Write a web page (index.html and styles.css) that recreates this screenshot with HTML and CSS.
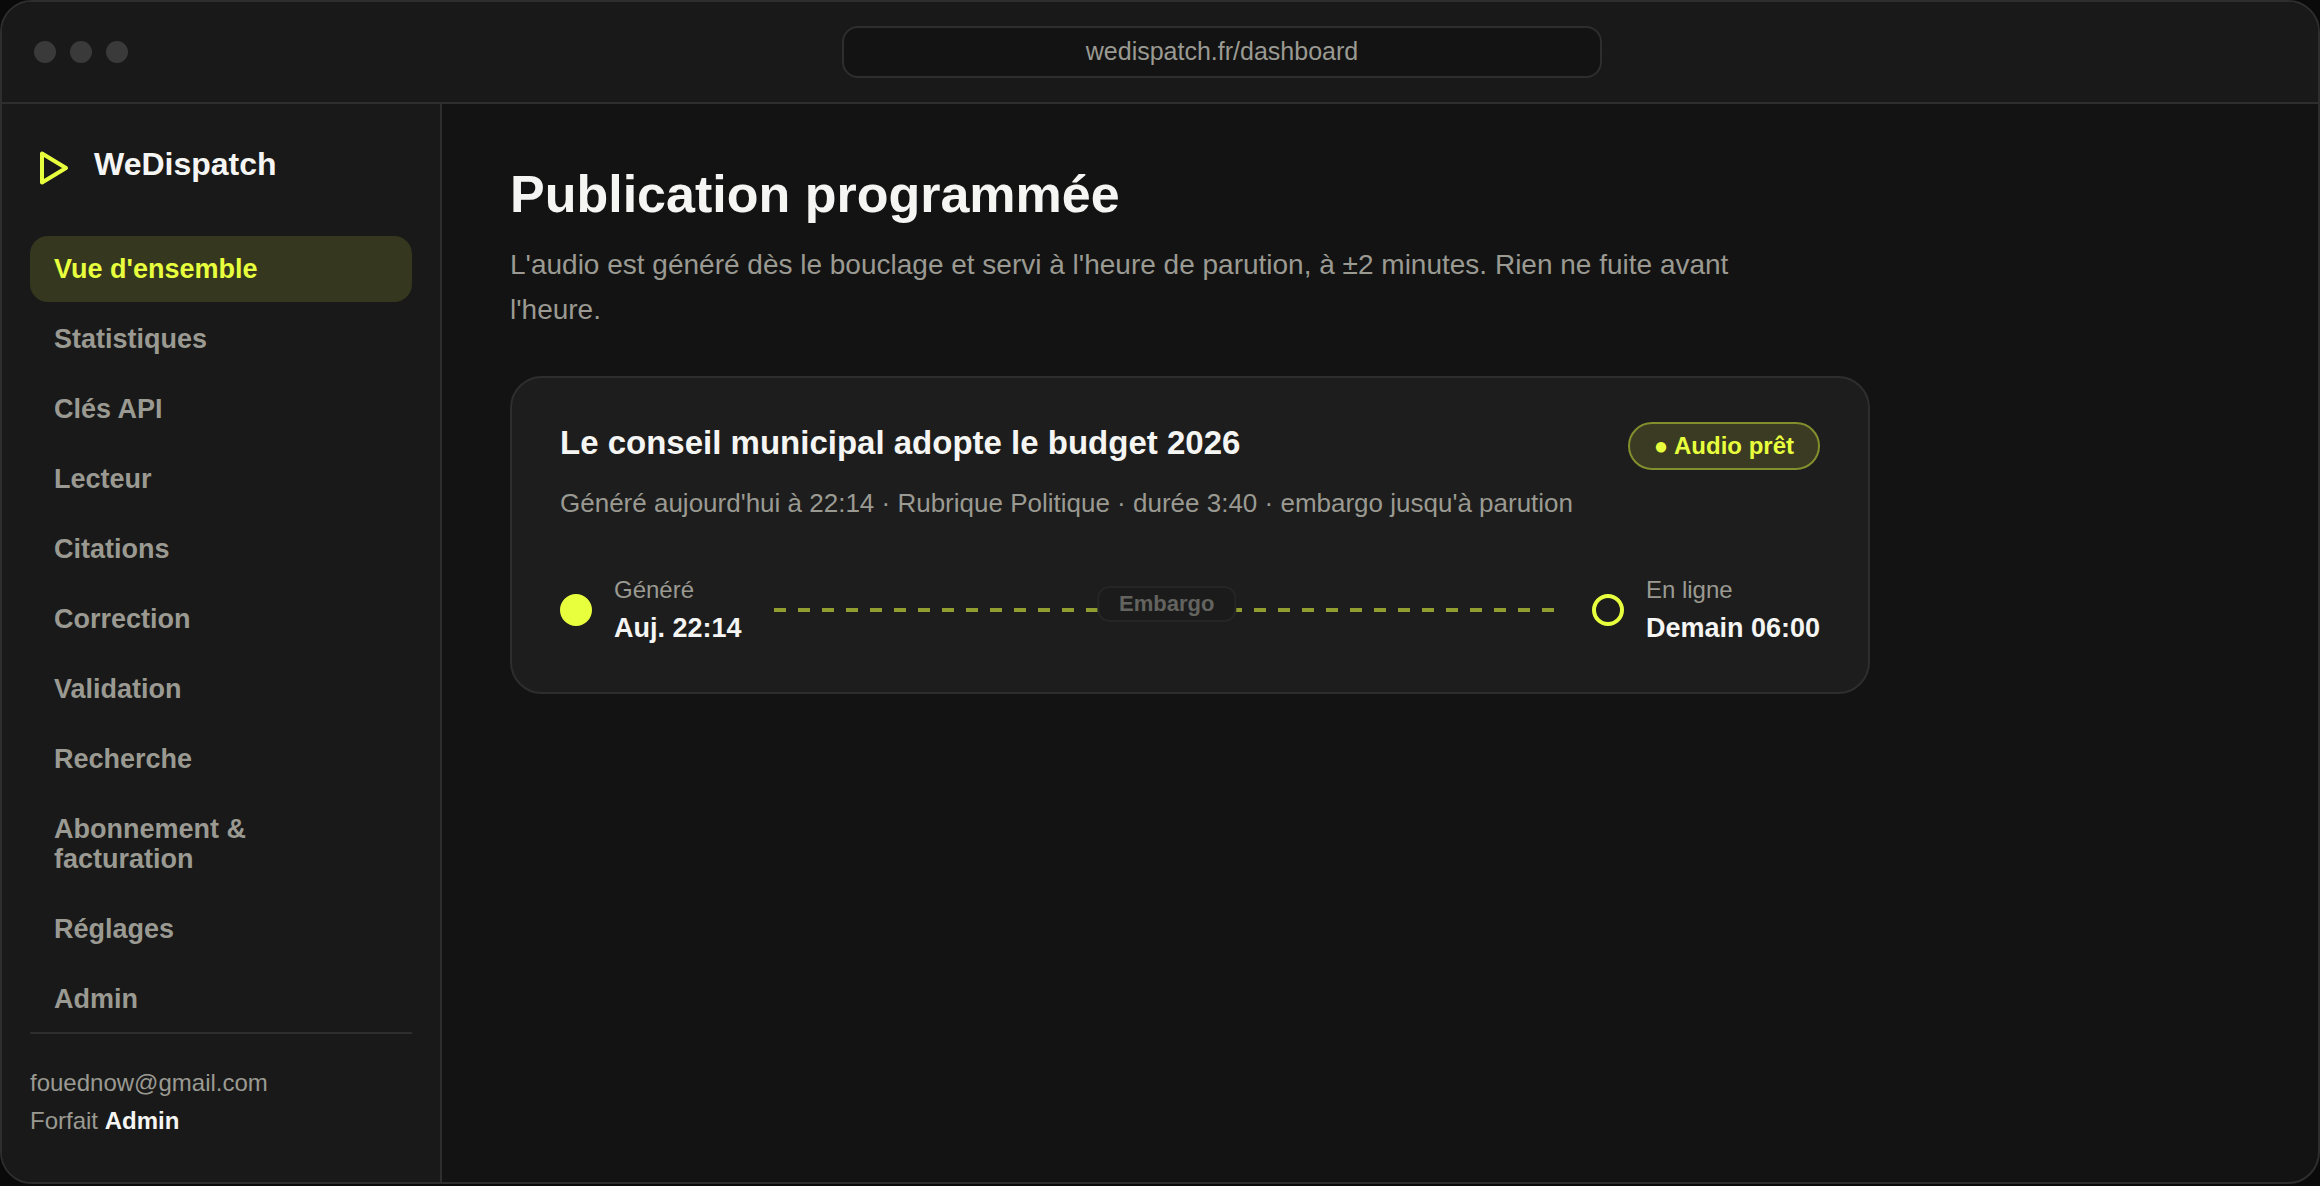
FILE: index.html
```html
<!DOCTYPE html>
<html lang="fr">
<head>
    <meta charset="UTF-8">
    <title>WeDispatch</title>
    <link rel="stylesheet" href="styles.css">
</head>
<body>
<div class="window">
    <!-- barre du navigateur -->
    <header class="topbar">
        <div class="dots">
            <span></span>
            <span></span>
            <span></span>
        </div>
        <div class="address">
            <div class="url">wedispatch.fr/dashboard</div>
        </div>
    </header>

    <div class="layout">
        <aside class="sidebar">
            <div class="brand">
                <svg class="logo" viewBox="0 0 48 48" fill="none" stroke="#e8ff3d" stroke-width="4" stroke-linejoin="round">
                    <path d="M12 13.5V42.5L36 28Z"/>
                </svg>
                <span>WeDispatch</span>
            </div>
            <nav class="nav">
                <a class="active" href="#">Vue d'ensemble</a>
                <a href="#">Statistiques</a>
                <a href="#">Clés API</a>
                <a href="#">Lecteur</a>
                <a href="#">Citations</a>
                <a href="#">Correction</a>
                <a href="#">Validation</a>
                <a href="#">Recherche</a>
                <a href="#">Abonnement &amp; facturation</a>
                <a href="#">Réglages</a>
                <a href="#">Admin</a>
            </nav>
            <div class="account">
                <div>fouednow@gmail.com</div>
                <div>Forfait <strong>Admin</strong></div>
            </div>
        </aside>

        <main class="main">
            <h1>Publication programmée</h1>
            <p class="intro">L'audio est généré dès le bouclage et servi à l'heure de parution, à ±2 minutes. Rien ne fuite avant l'heure.</p>

            <section class="card">
                <div class="card-head">
                    <div>
                        <h2>Le conseil municipal adopte le budget 2026</h2>
                        <p class="meta">Généré aujourd'hui à 22:14 · Rubrique Politique · durée 3:40 · embargo jusqu'à parution</p>
                    </div>
                    <span class="badge">● Audio prêt</span>
                </div>

                <!-- frise : généré -> en ligne -->
                <div class="timeline">
                    <div class="step">
                        <span class="point full"></span>
                        <div>
                            <div class="label">Généré</div>
                            <div class="time">Auj. 22:14</div>
                        </div>
                    </div>
                    <div class="track">
                        <span class="embargo">Embargo</span>
                    </div>
                    <div class="step">
                        <span class="point"></span>
                        <div>
                            <div class="label">En ligne</div>
                            <div class="time">Demain 06:00</div>
                        </div>
                    </div>
                </div>
            </section>
        </main>
    </div>
</div>
</body>
</html>
```
FILE: styles.css
```css
* {
    box-sizing: border-box;
}
body {
    margin: 0;
    padding-bottom: 2px;
    min-height: 100vh;
    display: flex;
    background: #0a0a0a;
    color: #f5f5f3;
    font-family: "Liberation Sans", Arial, sans-serif;
    font-size: 24px;
}
h1, h2, p {
    margin: 0;
}

.window {
    flex: 1;
    display: flex;
    flex-direction: column;
    border: 2px solid #2e2e2e;
    border-radius: 32px;
    background: #131313;
    overflow: hidden;
}

/* barre du haut */
.topbar {
    display: flex;
    align-items: center;
    gap: 30px;
    padding: 24px 32px;
    background: #191919;
    border-bottom: 2px solid #2e2e2e;
}
.dots {
    display: flex;
    gap: 14px;
}
.dots span {
    width: 22px;
    height: 22px;
    border-radius: 50%;
    background: #3a3a3a;
}
.address {
    flex: 1;
    display: flex;
    justify-content: center;
}
.url {
    width: 100%;
    max-width: 760px;
    padding: 9px 24px 11px;
    border: 2px solid #2e2e2e;
    border-radius: 16px;
    background: #131313;
    color: #9a9a92;
    font-size: 25px;
    line-height: 28px;
    text-align: center;
}

.layout {
    flex: 1;
    display: flex;
}

/* menu */
.sidebar {
    width: 440px;
    flex-shrink: 0;
    display: flex;
    flex-direction: column;
    padding: 36px 28px 42px;
    background: #191919;
    border-right: 2px solid #2e2e2e;
}
.brand {
    display: flex;
    align-items: center;
    gap: 16px;
    margin-bottom: 48px;
    font-size: 32px;
    font-weight: bold;
}
.logo {
    width: 48px;
    height: 48px;
}
.nav {
    display: flex;
    flex-direction: column;
    gap: 4px;
}
.nav a {
    padding: 18px 24px;
    border-radius: 18px;
    color: #9a9a92;
    font-size: 27px;
    font-weight: bold;
    line-height: 30px;
    text-decoration: none;
}
.nav a.active {
    background: #35371e;
    color: #e8ff3d;
}
.account {
    margin-top: auto;
    padding-top: 30px;
    border-top: 2px solid #2e2e2e;
    color: #9a9a92;
    line-height: 38px;
}
.account strong {
    color: #f5f5f3;
}

/* contenu */
.main {
    flex: 1;
    padding: 60px 68px;
}
h1 {
    font-size: 52px;
    line-height: 60px;
}
.intro {
    max-width: 1240px;
    margin-top: 18px;
    color: #9a9a92;
    font-size: 28px;
    line-height: 45px;
}
.card {
    max-width: 1360px;
    margin-top: 44px;
    padding: 44px 48px;
    border: 2px solid #2e2e2e;
    border-radius: 32px;
    background: #1d1d1d;
}
.card-head {
    display: flex;
    justify-content: space-between;
    align-items: flex-start;
    gap: 24px;
}
h2 {
    font-size: 33px;
    line-height: 42px;
}
.meta {
    margin-top: 24px;
    color: #9a9a92;
    font-size: 26px;
    line-height: 30px;
}
.badge {
    padding: 8px 24px;
    border: 2px solid #838f2d;
    border-radius: 24px;
    background: #3a3b22;
    color: #e8ff3d;
    font-weight: bold;
    line-height: 28px;
    white-space: nowrap;
}

.timeline {
    display: flex;
    align-items: center;
    gap: 32px;
    margin-top: 54px;
}
.step {
    display: flex;
    align-items: center;
    gap: 22px;
}
.point {
    width: 32px;
    height: 32px;
    border: 4px solid #e8ff3d;
    border-radius: 50%;
}
.point.full {
    background: #e8ff3d;
}
.label {
    color: #9a9a92;
    line-height: 36px;
}
.time {
    font-size: 27px;
    font-weight: bold;
    line-height: 40px;
}
.track {
    position: relative;
    flex: 1;
    height: 4px;
    background: repeating-linear-gradient(90deg, #929d2f 0 12px, transparent 12px 24px);
}
/* pastille posée sur la ligne */
.embargo {
    position: absolute;
    left: 50%;
    bottom: -10px;
    transform: translateX(-50%);
    padding: 4px 20px;
    border: 2px solid #252525;
    border-radius: 12px;
    background: #1b1b1b;
    color: #63635f;
    font-size: 22px;
    font-weight: bold;
    line-height: 24px;
}
```
